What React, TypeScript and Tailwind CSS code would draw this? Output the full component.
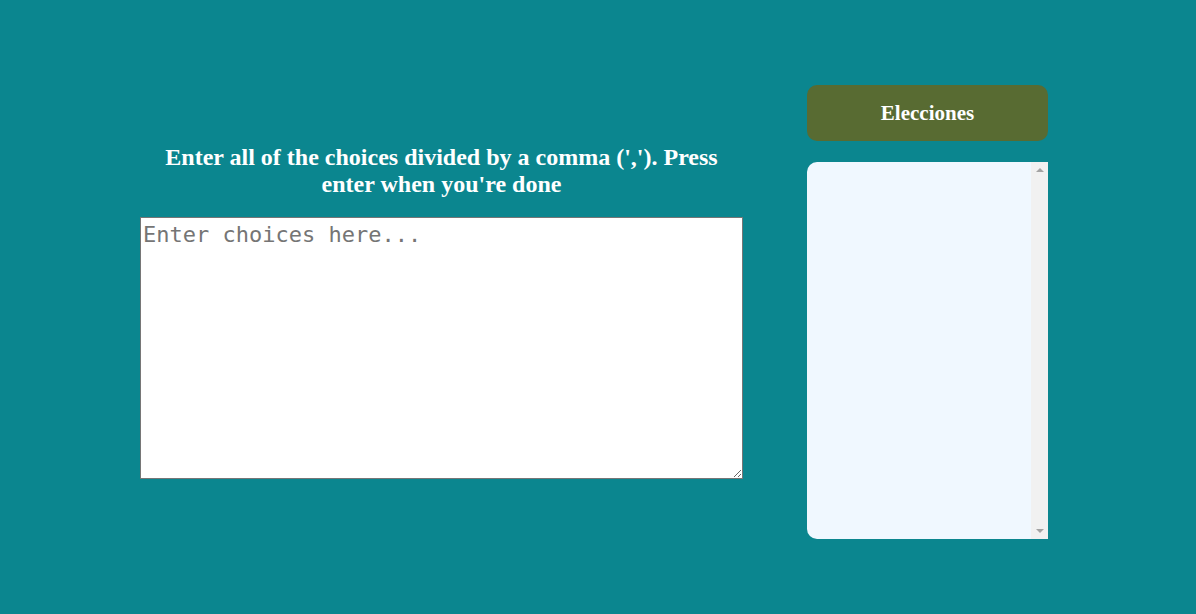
import React from "react";

export default function App() {
  return (
    <div className="min-h-[614px] w-full bg-[#0b868f]">
      <div className="flex items-start pl-[140px] pt-[85px]">
        <div className="flex w-[603px] flex-col items-center pt-[59px]">
          <h2 className="w-[580px] text-center font-['Liberation_Serif',serif] text-[24px] font-bold leading-[27px] text-white">
            Enter all of the choices divided by a comma (','). Press enter when you're done
          </h2>
          <textarea
            placeholder="Enter choices here..."
            className="mt-[19px] h-[262px] w-[603px] resize-y border border-[#767676] bg-white px-[2px] pt-[4px] font-['DejaVu_Sans_Mono',monospace] text-[22px] leading-[26px] text-black outline-none placeholder:text-[#757575]"
          />
        </div>
        <div className="ml-[64px] flex w-[241px] flex-col">
          <div className="flex h-[56px] items-center justify-center rounded-[10px] bg-[#586b32] pt-[2px]">
            <span className="font-['Liberation_Serif',serif] text-[21px] font-bold text-white">Elecciones</span>
          </div>
          <div className="mt-[21px] flex h-[377px] overflow-hidden rounded-l-[10px] bg-[#f0f8ff]">
            <div className="flex-1"></div>
            <div className="flex w-[17px] flex-col items-center justify-between bg-[#f1f1f1] py-[6px]">
              <div className="h-0 w-0 border-x-[4px] border-b-[4px] border-x-transparent border-b-[#a3a3a3]"></div>
              <div className="h-0 w-0 border-x-[4px] border-t-[4px] border-x-transparent border-t-[#a3a3a3]"></div>
            </div>
          </div>
        </div>
      </div>
    </div>
  );
}
